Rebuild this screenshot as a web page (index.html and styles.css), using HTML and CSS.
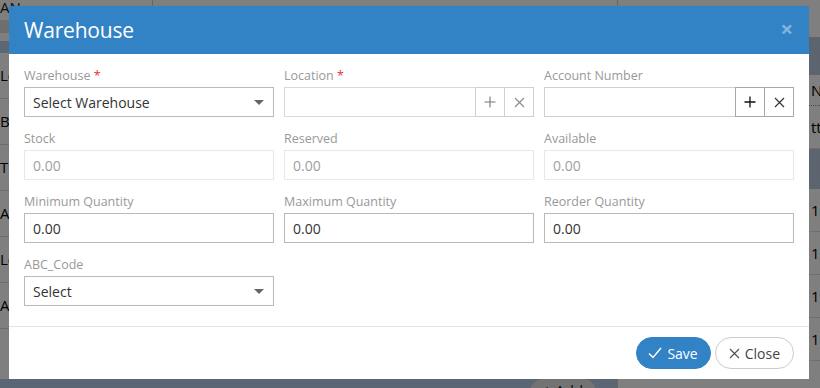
FILE: index.html
```html
<!DOCTYPE html>
<html lang="en">
<head>
  <meta charset="UTF-8">
  <title>Warehouse</title>
  <link rel="stylesheet" href="styles.css">
</head>
<body>

  <!-- page behind the dialog -->
  <div class="page">
    <div class="side-left">
      <div class="cell top">AN</div>
      <div class="band"></div>
      <div class="band blue"></div>
      <div class="cell">Le</div>
      <div class="cell">B</div>
      <div class="cell">T</div>
      <div class="cell">A</div>
      <div class="cell">Le</div>
      <div class="cell">A</div>
    </div>
    <div class="center"></div>
    <div class="side-right">
      <div class="head-band"></div>
      <div class="row dotted">Na</div>
      <div class="row">tte</div>
      <div class="head-band tall"></div>
      <div class="row">15</div>
      <div class="row">18</div>
      <div class="row">19</div>
      <div class="row">19</div>
    </div>
    <div class="page-bar">
      <span class="add-btn">+ Add</span>
    </div>
  </div>

  <div class="backdrop"></div>

  <div class="modal">
    <div class="modal-header">
      <h4>Warehouse</h4>
      <span class="x-close">&times;</span>
    </div>

    <div class="modal-body">
      <div class="field">
        <label>Warehouse <span class="req">*</span></label>
        <div class="select">Select Warehouse <span class="caret"></span></div>
      </div>

      <div class="field">
        <label>Location <span class="req">*</span></label>
        <div class="input-group">
          <div class="input"></div>
          <span class="addon">
            <svg width="12" height="12" viewBox="0 0 12 12"><path d="M6 0.5V11.5M0.5 6H11.5" stroke="#777" stroke-width="1.1" fill="none"/></svg>
          </span>
          <span class="addon">
            <svg width="11" height="11" viewBox="0 0 11 11"><path d="M1 1L10 10M10 1L1 10" stroke="#888" stroke-width="1.1" fill="none"/></svg>
          </span>
        </div>
      </div>

      <div class="field">
        <label>Account Number</label>
        <div class="input-group dark">
          <div class="input"></div>
          <span class="addon">
            <svg width="12" height="12" viewBox="0 0 12 12"><path d="M6 0.5V11.5M0.5 6H11.5" stroke="#111" stroke-width="1.3" fill="none"/></svg>
          </span>
          <span class="addon">
            <svg width="11" height="11" viewBox="0 0 11 11"><path d="M1 1L10 10M10 1L1 10" stroke="#333" stroke-width="1.2" fill="none"/></svg>
          </span>
        </div>
      </div>

      <div class="field">
        <label>Stock</label>
        <div class="input disabled">0.00</div>
      </div>
      <div class="field">
        <label>Reserved</label>
        <div class="input disabled">0.00</div>
      </div>
      <div class="field">
        <label>Available</label>
        <div class="input disabled">0.00</div>
      </div>

      <div class="field">
        <label>Minimum Quantity</label>
        <div class="input">0.00</div>
      </div>
      <div class="field">
        <label>Maximum Quantity</label>
        <div class="input">0.00</div>
      </div>
      <div class="field">
        <label>Reorder Quantity</label>
        <div class="input">0.00</div>
      </div>

      <div class="field">
        <label>ABC_Code</label>
        <div class="select">Select <span class="caret"></span></div>
      </div>
    </div>

    <div class="modal-footer">
      <button class="btn btn-primary">
        <svg width="14" height="12" viewBox="0 0 14 12"><path d="M1 6.5L5 10.5L13 1" stroke="#fff" stroke-width="1.5" fill="none"/></svg>
        Save
      </button>
      <button class="btn btn-default">
        <svg width="11" height="11" viewBox="0 0 11 11"><path d="M1 1L10 10M10 1L1 10" stroke="#555" stroke-width="1.2" fill="none"/></svg>
        Close
      </button>
    </div>
  </div>

</body>
</html>
```

FILE: styles.css
```css
body {
  margin: 0;
  width: 820px;
  height: 388px;
  overflow: hidden;
  font-family: "Open Sans", "Liberation Sans", sans-serif;
  color: #333;
  background: #fff;
  position: relative;
}

/* background page */
.page {
  display: grid;
  grid-template-columns: 153px 1fr 203px;
  grid-template-rows: 1fr 9px;
  height: 388px;
}

.side-left {
  border-right: 1px solid #ccc;
  font-size: 15px;
  color: #000;
  overflow: hidden;
}

.side-left .cell {
  height: 45px;
  line-height: 45px;
  border-bottom: 1px solid #ddd;
}

.side-left .cell.top {
  height: 20px;
  line-height: 14px;
  color: #222;
}

.side-left .band {
  height: 12px;
  background: #dcdcdc;
}

.side-left .band.blue {
  height: 12px;
  margin-top: 8px;
  background: #b9cfe9;
}

.page-bar {
  grid-column: 1 / 3;
  grid-row: 2;
  background: #b5cde6;
  padding-left: 530px;
}

.add-btn {
  display: inline-block;
  width: 66px;
  height: 26px;
  border-radius: 13px;
  background: #e6e6e6;
  color: #111;
  font-size: 15px;
  text-align: center;
  line-height: 22px;
  margin-top: -7px;
}

.side-right {
  grid-column: 3;
  grid-row: 1 / 3;
  border-left: 1px solid #ccc;
  padding-top: 37px;
  font-size: 15px;
  color: #000;
}

.side-right .head-band {
  height: 38px;
  background: #b7c8de;
}

.side-right .head-band.tall {
  height: 40px;
}

.side-right .row {
  height: 42px;
  line-height: 42px;
  padding-left: 193px;
  border-bottom: 1px solid #ddd;
  white-space: nowrap;
  overflow: hidden;
}

.side-right .row.dotted {
  height: 30px;
  line-height: 30px;
  border-bottom: 1px dotted #999;
}

.backdrop {
  position: absolute;
  left: 0;
  top: 0;
  right: 0;
  bottom: 0;
  background: rgba(0, 0, 0, 0.5);
}

/* dialog */
.modal {
  position: absolute;
  left: 9px;
  top: 6px;
  width: 800px;
  background: #fff;
}

.modal-header {
  height: 48px;
  background: #3282c6;
  color: #fff;
  padding: 0 15px;
  display: flex;
  align-items: center;
  justify-content: space-between;
}

.modal-header h4 {
  margin: 0;
  font-size: 21px;
  font-weight: 400;
  letter-spacing: -0.2px;
}

.x-close {
  font-size: 22px;
  font-weight: 700;
  color: #fff;
  opacity: 0.4;
  line-height: 1;
  margin-top: -4px;
  margin-right: 1px;
}

.modal-body {
  padding: 13px 15px 7px;
  display: grid;
  grid-template-columns: 250px 250px 250px;
  column-gap: 10px;
}

.field {
  margin-bottom: 13px;
}

.field label {
  display: block;
  font-size: 12.5px;
  line-height: 18px;
  margin-bottom: 2px;
  color: #999;
}

.req {
  color: #e33;
}

.input,
.select {
  box-sizing: border-box;
  height: 30px;
  border: 1px solid #b9b9b9;
  padding: 0 8px;
  font-size: 14px;
  line-height: 29px;
  color: #333;
  background: #fff;
}

.input.disabled {
  border-color: #e8e8e8;
  color: #a0a0a0;
}

.select {
  display: flex;
  justify-content: space-between;
  align-items: center;
}

.caret {
  width: 0;
  height: 0;
  border-left: 5px solid transparent;
  border-right: 5px solid transparent;
  border-top: 5px solid #666;
  margin-right: 1px;
}

.input-group {
  display: flex;
}

.input-group .input {
  flex: 1;
}

.addon {
  box-sizing: border-box;
  width: 30px;
  height: 30px;
  margin-left: -1px;
  border: 1px solid #d0d0d0;
  display: flex;
  align-items: center;
  justify-content: center;
}

.input-group.dark .addon {
  border-color: #a8a8a8;
  position: relative;
}

.input-group:not(.dark) .input {
  border-color: #d8d8d8;
}

.input-group.dark .input {
  border-color: #d0d0d0;
}

.modal-footer {
  border-top: 1px solid #e3e3e3;
  padding: 10px 15px;
  display: flex;
  justify-content: flex-end;
  gap: 4px;
}

.btn {
  height: 32px;
  border-radius: 16px;
  font-family: inherit;
  font-size: 14px;
  padding: 0 12px;
  display: flex;
  align-items: center;
  gap: 5px;
  cursor: pointer;
}

.btn-primary {
  background: #3282c6;
  border: 1px solid #3282c6;
  color: #fff;
  padding: 0 12px 0 11px;
}

.btn-default {
  background: #fff;
  border: 1px solid #ccc;
  color: #444;
  padding: 0 13px;
}
```
